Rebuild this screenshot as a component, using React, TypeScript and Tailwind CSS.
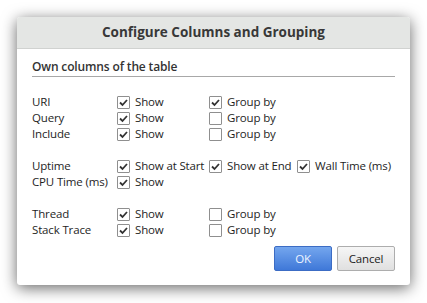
import React from "react";

function Check({ on }: { on?: boolean }) {
  return (
    <span className="w-[13px] h-[13px] shrink-0 border border-[#8f8f8f] bg-white rounded-[1px] flex items-center justify-center">
      {on && (
        <svg width="11" height="11" viewBox="0 0 11 11">
          <path d="M2 5.5 L4.5 8 L9 3" fill="none" stroke="#333" strokeWidth="1.8" />
        </svg>
      )}
    </span>
  );
}

function Opt({ on, label }: { on?: boolean; label: string }) {
  return (
    <div className="flex items-center gap-[5px] whitespace-nowrap">
      <Check on={on} />
      <span>{label}</span>
    </div>
  );
}

type Row = { name: string; opts: { on?: boolean; label: string }[] } | null;

const rows: Row[] = [
  { name: "URI", opts: [{ on: true, label: "Show" }, { on: true, label: "Group by" }] },
  { name: "Query", opts: [{ on: true, label: "Show" }, { label: "Group by" }] },
  { name: "Include", opts: [{ on: true, label: "Show" }, { label: "Group by" }] },
  null,
  {
    name: "Uptime",
    opts: [
      { on: true, label: "Show at Start" },
      { on: true, label: "Show at End" },
      { on: true, label: "Wall Time (ms)" },
    ],
  },
  { name: "CPU Time (ms)", opts: [{ on: true, label: "Show" }] },
  null,
  { name: "Thread", opts: [{ on: true, label: "Show" }, { label: "Group by" }] },
  { name: "Stack Trace", opts: [{ on: true, label: "Show" }, { label: "Group by" }] },
];

export default function App() {
  return (
    <div
      className="w-[427px] h-[303px] bg-white pt-[17px] pl-[17px] text-[11.5px] tracking-[-0.15px] text-[#1e1e1e]"
      style={{ fontFamily: '"Open Sans", "Noto Sans", sans-serif' }}
    >
      <div className="w-[393px] h-[268px] bg-white rounded-[3px] shadow-[0_3px_15px_rgba(0,0,0,0.6)] flex flex-col overflow-hidden">
        {/* Header */}
        <div className="h-[32px] bg-[#e4e6e4] border-b border-[#d0d2d0] flex items-center justify-center">
          <span className="text-[13.5px] font-bold tracking-normal text-[#383838]">Configure Columns and Grouping</span>
        </div>

        <div className="flex-1 px-[15px] flex flex-col">
          <div className="mt-[10px] pb-[1px] border-b border-[#a8a8a8] leading-[16px] text-[12px] font-semibold text-[#333]">
            Own columns of the table
          </div>

          <div className="mt-[17px] flex flex-col">
            {rows.map((r, i) =>
              r ? (
                <div key={i} className="h-[16px] leading-[16px] grid grid-cols-[85px_92px_88px_auto] items-center">
                  <span className="whitespace-nowrap">{r.name}</span>
                  {r.opts.map((o, j) => (
                    <Opt key={j} on={o.on} label={o.label} />
                  ))}
                </div>
              ) : (
                <div key={i} className="h-[16px]" />
              )
            )}
          </div>

          <div className="mt-auto mb-[14px] flex justify-end gap-[5px]">
            <button className="w-[58px] h-[25px] rounded-[2px] border border-[#3c6cc4] bg-gradient-to-b from-[#74a6ee] to-[#3f78d8] text-[#eef4ff]">
              OK
            </button>
            <button className="w-[58px] h-[25px] rounded-[2px] border border-[#adadad] bg-gradient-to-b from-[#f6f6f6] to-[#e0e0e0] text-[#222]">
              Cancel
            </button>
          </div>
        </div>
      </div>
    </div>
  );
}
